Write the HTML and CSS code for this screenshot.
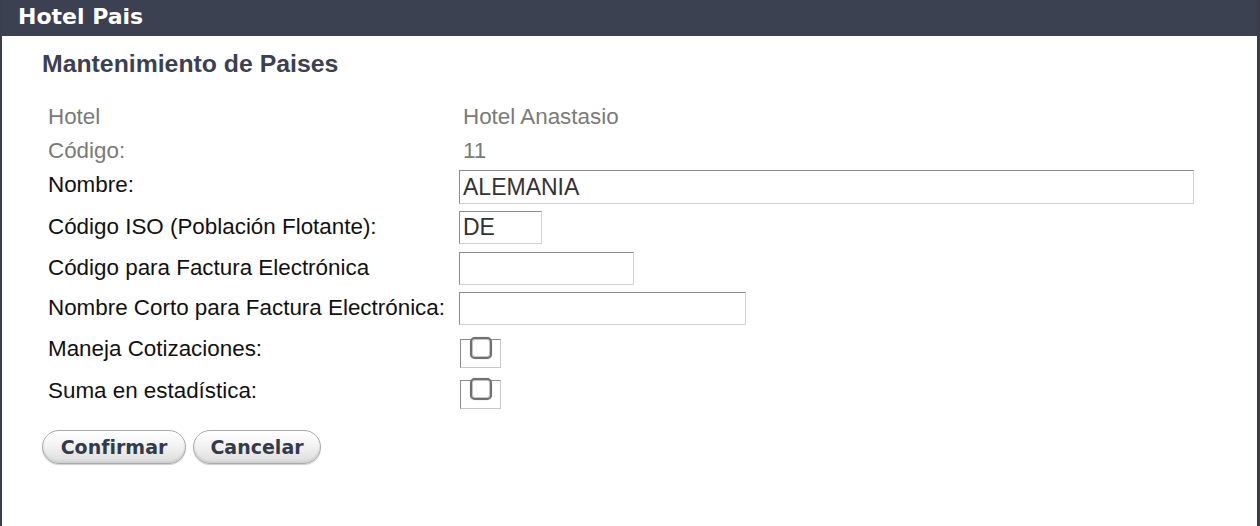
FILE: index.html
```html
<!DOCTYPE html>
<html lang="es">
<head>
<meta charset="utf-8">
<title>Hotel Pais</title>
<link rel="stylesheet" href="styles.css">
</head>
<body>
<div class="frame">
  <div class="titlebar">Hotel Pais</div>
  <div class="content">
    <h1 class="subtitle">Mantenimiento de Paises</h1>
    <div class="form">
      <div class="lbl muted r1">Hotel</div><div class="val muted r1">Hotel Anastasio</div>
      <div class="lbl muted r2">Código:</div><div class="val muted r2">11</div>
      <div class="lbl r3">Nombre:</div><div class="fld r3"><input class="txt w-nombre" type="text" value="ALEMANIA"></div>
      <div class="lbl r4">Código ISO (Población Flotante):</div><div class="fld r4"><input class="txt w-iso" type="text" value="DE"></div>
      <div class="lbl r5">Código para Factura Electrónica</div><div class="fld r5"><input class="txt w-fact" type="text" value=""></div>
      <div class="lbl r6">Nombre Corto para Factura Electrónica:</div><div class="fld r6"><input class="txt w-corto" type="text" value=""></div>
      <div class="lbl r7">Maneja Cotizaciones:</div><div class="fld r7"><span class="chkwrap"><span class="chk"></span></span></div>
      <div class="lbl r8">Suma en estadística:</div><div class="fld r8"><span class="chkwrap"><span class="chk"></span></span></div>
    </div>
    <div class="buttons">
      <button class="btn btn-confirm" type="button">Confirmar</button>
      <button class="btn btn-cancel" type="button">Cancelar</button>
    </div>
  </div>
</div>
</body>
</html>
```

FILE: styles.css
```css
* { box-sizing: border-box; }
html, body { margin: 0; padding: 0; background: #fff; }
body { font-family: "Liberation Sans", Arial, sans-serif; }

.frame {
  width: 1260px;
  height: 526px;
  border-left: 2px solid #3a3f4b;
  border-right: 3px solid #3a3d44;
  background: #fff;
}

.titlebar {
  height: 36px;
  background: #3b4150;
  color: #fff;
  font-family: "DejaVu Sans", Verdana, sans-serif;
  font-weight: bold;
  font-size: 22px;
  line-height: 34px;
  padding-left: 16px;
}

.content { padding-left: 40px; }

.subtitle {
  margin: 0;
  padding-top: 13px;
  height: 64px;
  font-family: "Liberation Sans", Arial, sans-serif;
  font-weight: bold;
  font-size: 24.8px;
  line-height: 30px;
  color: #3b4150;
}

.form {
  display: grid;
  grid-template-columns: 417px 1fr;
  grid-template-rows: 34px 34px 38px 42px 40px 40px 42px 42px;
  align-items: center;
  font-size: 22.4px;
  color: #111;
}

.lbl { padding-left: 6px; white-space: nowrap; }
.val { padding-left: 4px; }
.muted { color: #7a7a7a; }
.r3.lbl { align-self: center; margin-top: -4px; }

.txt {
  display: block;
  height: 34px;
  margin: 0;
  padding: 1px 3px 0;
  font-family: "Liberation Sans", Arial, sans-serif;
  font-size: 23px;
  color: #333;
  background: #fff;
  border: 1px solid;
  border-color: #8c8c8c #d2d2d2 #d2d2d2 #8c8c8c;
  outline: none;
}
.w-nombre { width: 735px; }
.w-iso { width: 83px; height: 33px; }
.w-fact { width: 175px; height: 33px; }
.w-corto { width: 287px; height: 33px; }

.fld.r7, .fld.r8 { align-self: start; }
.fld.r7 { padding-top: 11px; }
.fld.r8 { padding-top: 10px; }

.chkwrap {
  display: block;
  position: relative;
  width: 41px;
  height: 29px;
  margin-left: 1px;
  border: 1px solid;
  border-color: #8c8c8c #c8c8c8 #c8c8c8 #8c8c8c;
}
.chk {
  position: absolute;
  left: 9px;
  top: -3px;
  width: 22px;
  height: 22px;
  background: #fff;
  border: 2px solid #707070;
  border-radius: 5px;
  box-shadow: 0 0 0 1px #c4c4c4 inset, 0 0 1px #999;
}

.buttons {
  display: flex;
  gap: 7px;
  margin-top: 18px;
}
.btn {
  height: 34px;
  padding: 0 0 1px;
  font-family: "DejaVu Sans", Verdana, sans-serif;
  font-weight: bold;
  font-size: 19px;
  color: #333b4b;
  border: 1px solid #a9a9a9;
  border-radius: 17px;
  background: linear-gradient(#ffffff 0%, #f3f3f3 45%, #dcdcdc 100%);
  box-shadow: inset 0 1px 0 #fff, inset 0 -2px 2px #d0d0d0, 0 1px 1px #cfcfcf;
  cursor: pointer;
}
.btn-confirm { width: 144px; }
.btn-cancel { width: 128px; }
```
